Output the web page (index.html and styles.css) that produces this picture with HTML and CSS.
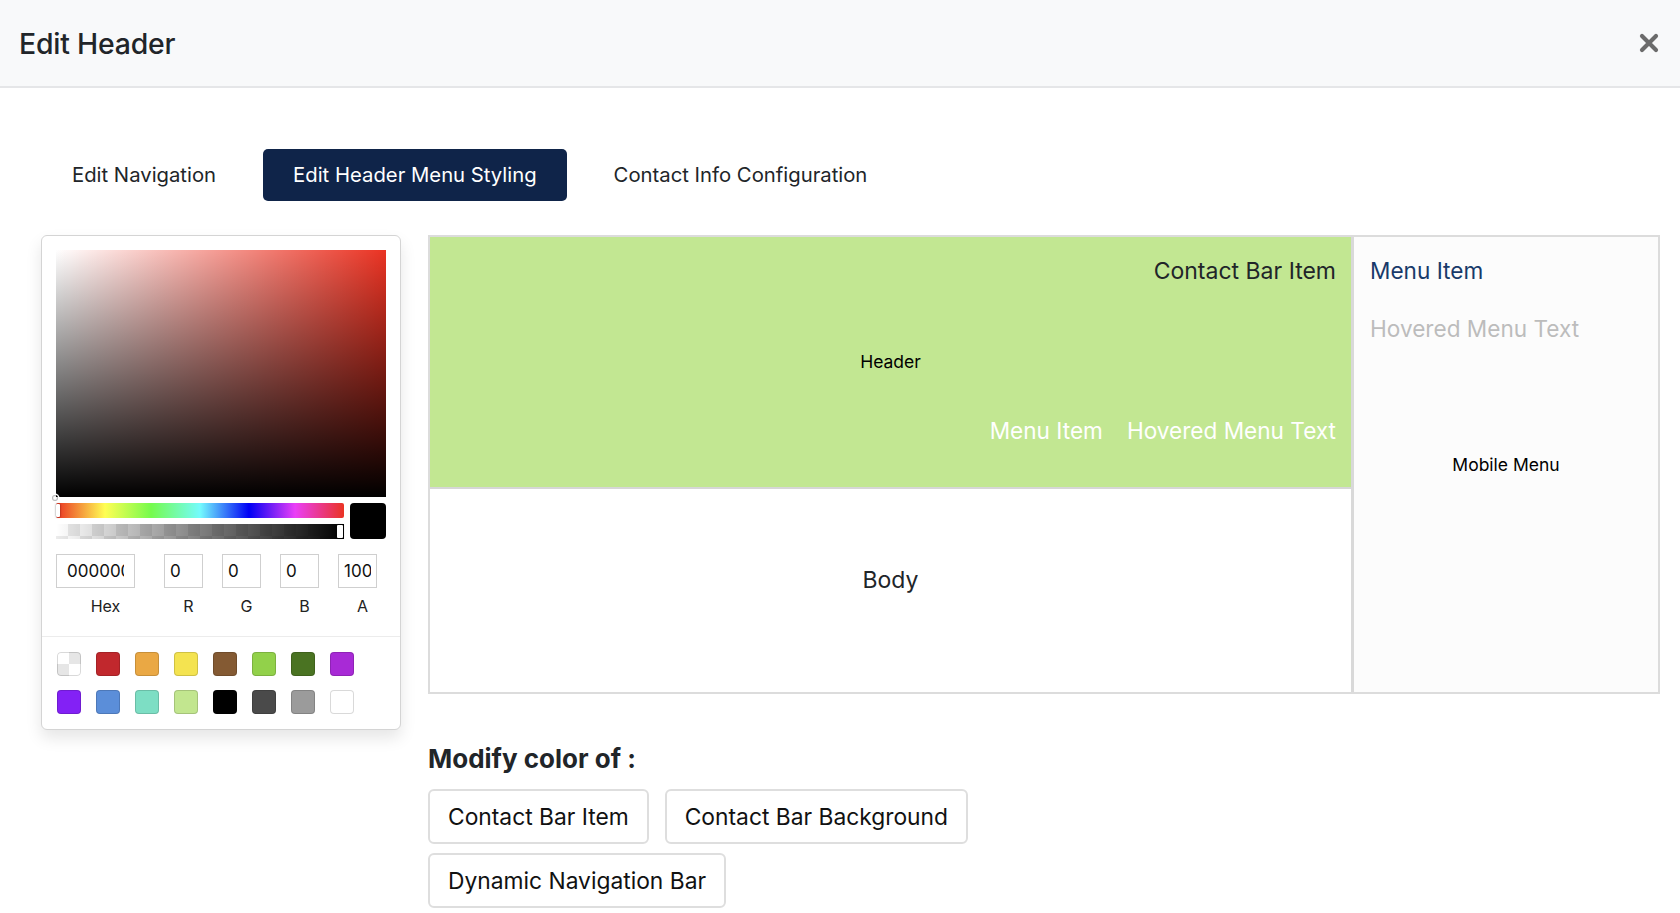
FILE: index.html
```html
<!DOCTYPE html>
<html lang="en">
<head>
    <meta charset="UTF-8">
    <meta name="viewport" content="width=device-width, initial-scale=1.0">
    <title>Edit Header</title>
    <link rel="stylesheet" href="styles.css">
</head>
<body>
    <div class="modal">
        <header class="modal-header">
            <h1 class="modal-title">Edit Header</h1>
            <button class="close" type="button" aria-label="Close">
                <svg width="20" height="20" viewBox="0 0 20 20">
                    <path d="M3 3 L17 17 M17 3 L3 17" stroke="#6b6b6b" stroke-width="4.2" stroke-linecap="round" fill="none"/>
                </svg>
            </button>
        </header>

        <main class="modal-body">
            <nav class="tabs">
                <a class="tab">Edit Navigation</a>
                <a class="tab active">Edit Header Menu Styling</a>
                <a class="tab">Contact Info Configuration</a>
            </nav>

            <div class="editor">
                <!-- color picker -->
                <div class="picker">
                    <div class="saturation">
                        <span class="sat-pointer"></span>
                    </div>
                    <div class="controls">
                        <div class="sliders">
                            <div class="hue"><span class="hue-pointer"></span></div>
                            <div class="alpha">
                                <div class="alpha-gradient"></div>
                                <span class="alpha-pointer"></span>
                            </div>
                        </div>
                        <div class="current"></div>
                    </div>
                    <div class="fields">
                        <div class="field field-hex">
                            <input type="text" value="000000">
                            <label>Hex</label>
                        </div>
                        <div class="field field-single">
                            <input type="text" value="0">
                            <label>R</label>
                        </div>
                        <div class="field field-single">
                            <input type="text" value="0">
                            <label>G</label>
                        </div>
                        <div class="field field-single">
                            <input type="text" value="0">
                            <label>B</label>
                        </div>
                        <div class="field field-single">
                            <input type="text" value="100">
                            <label>A</label>
                        </div>
                    </div>
                    <div class="presets">
                        <span class="swatch swatch-clear"></span>
                        <span class="swatch" style="background:#c1282d"></span>
                        <span class="swatch" style="background:#eaa844"></span>
                        <span class="swatch" style="background:#f4e350"></span>
                        <span class="swatch" style="background:#845a33"></span>
                        <span class="swatch" style="background:#92d14a"></span>
                        <span class="swatch" style="background:#4a7322"></span>
                        <span class="swatch" style="background:#a82ad6"></span>
                        <span class="swatch" style="background:#8321f5"></span>
                        <span class="swatch" style="background:#5b8ed9"></span>
                        <span class="swatch" style="background:#7ddec4"></span>
                        <span class="swatch" style="background:#c2e68f"></span>
                        <span class="swatch" style="background:#000000"></span>
                        <span class="swatch" style="background:#4a4a4a"></span>
                        <span class="swatch" style="background:#9b9b9b"></span>
                        <span class="swatch" style="background:#ffffff"></span>
                    </div>
                </div>

                <!-- preview -->
                <div class="preview-col">
                    <div class="preview">
                        <div class="preview-main">
                            <div class="pv-header">
                                <div class="pv-contact">Contact Bar Item</div>
                                <div class="pv-label">Header</div>
                                <div class="pv-menu">
                                    <span>Menu Item</span>
                                    <span>Hovered Menu Text</span>
                                </div>
                            </div>
                            <div class="pv-body">Body</div>
                        </div>
                        <div class="pv-mobile">
                            <div class="pv-mobile-items">
                                <span class="pv-mobile-item">Menu Item</span>
                                <span class="pv-mobile-hover">Hovered Menu Text</span>
                            </div>
                            <div class="pv-label">Mobile Menu</div>
                        </div>
                    </div>

                    <h2 class="modify-title">Modify color of :</h2>
                    <div class="modify-buttons">
                        <button type="button" class="modify-btn">Contact Bar Item</button>
                        <button type="button" class="modify-btn">Contact Bar Background</button>
                        <button type="button" class="modify-btn">Dynamic Navigation Bar</button>
                    </div>
                </div>
            </div>
        </main>
    </div>
</body>
</html>
```

FILE: styles.css
```css
body {
    margin: 0;
    font-family: Inter, "Liberation Sans", Arial, sans-serif;
    color: #212529;
    background: #fff;
}

.modal-header {
    height: 86px;
    background: #f8f9fa;
    border-bottom: 2px solid #e5e6e8;
    display: flex;
    align-items: center;
    justify-content: space-between;
    padding: 0 21px 0 19px;
}
.modal-title {
    margin: 0;
    font-size: 28.4px;
    font-weight: 500;
    letter-spacing: -0.2px;
}
.close {
    border: none;
    background: none;
    padding: 0;
    width: 20px;
    height: 20px;
    display: flex;
}

.modal-body {
    padding: 61px 20px 0 41px;
}

.tabs {
    display: flex;
    gap: 17px;
    margin-left: 1px;
}
.tab {
    display: block;
    padding: 0 30px;
    line-height: 52px;
    font-size: 20.3px;
    color: #212529;
    border-radius: 5px;
}
.tab.active {
    background: #0f2449;
    color: #fff;
}

.editor {
    display: flex;
    align-items: flex-start;
    gap: 27px;
    margin-top: 34px;
}

/* picker */
.picker {
    width: 360px;
    box-sizing: border-box;
    padding: 14px 14px 0;
    background: #fff;
    border: 1px solid #d4d4d4;
    border-radius: 6px;
    box-shadow: 0 8px 16px rgba(0, 0, 0, 0.1);
}
.saturation {
    position: relative;
    height: 247px;
    background:
        linear-gradient(to top, #000, rgba(0, 0, 0, 0)),
        linear-gradient(to right, #fff, rgba(255, 255, 255, 0)),
        #ea3323;
}
.sat-pointer {
    position: absolute;
    left: -4px;
    bottom: -4px;
    width: 6px;
    height: 6px;
    border-radius: 50%;
    box-shadow: 0 0 0 1.5px #fff, inset 0 0 1px 1px rgba(0, 0, 0, 0.3);
}
.controls {
    display: flex;
    gap: 6px;
    margin-top: 6px;
}
.sliders {
    flex: 1;
    display: flex;
    flex-direction: column;
    gap: 6px;
}
.hue {
    position: relative;
    height: 15px;
    border-radius: 2px;
    background: linear-gradient(to right, #ea3323 0%, #fffe54 17%, #75fb4c 33%, #74fbfd 50%, #0000f5 67%, #ea3ff7 83%, #ea3323 100%);
}
.hue-pointer {
    position: absolute;
    left: 0;
    top: 1px;
    width: 4px;
    height: 13px;
    background: #fff;
    border-radius: 1px;
    box-shadow: 0 0 2px rgba(0, 0, 0, 0.6);
}
.alpha {
    position: relative;
    height: 15px;
    background-color: #fff;
    background-image:
        linear-gradient(45deg, #ebebeb 25%, transparent 25%, transparent 75%, #ebebeb 75%),
        linear-gradient(45deg, #ebebeb 25%, transparent 25%, transparent 75%, #ebebeb 75%);
    background-size: 24px 24px;
    background-position: 0 0, 12px 12px;
}
.alpha-gradient {
    height: 100%;
    background: linear-gradient(to right, rgba(0, 0, 0, 0), #000);
}
.alpha-pointer {
    position: absolute;
    right: 1px;
    top: 1px;
    width: 6px;
    height: 13px;
    background: #fff;
    border-radius: 1px;
    box-shadow: 0 0 2px rgba(0, 0, 0, 0.6);
}
.current {
    width: 36px;
    height: 36px;
    border-radius: 4px;
    background: #000;
}

.fields {
    display: flex;
    padding-top: 15px;
}
.field {
    display: flex;
    flex-direction: column;
    flex-shrink: 0;
}
.field-hex {
    width: 99px;
}
.field-single {
    width: 49px;
    padding-left: 9px;
}
.field input {
    width: 80%;
    height: 34px;
    box-sizing: border-box;
    border: 1px solid #cfcfcf;
    padding: 0 5px;
    font-family: inherit;
    font-size: 17px;
    color: #111;
    outline: none;
}
.field-hex input {
    padding: 0 10px;
}
.field label {
    display: block;
    text-align: center;
    font-size: 16px;
    line-height: 20px;
    padding-top: 8px;
    color: #222;
}

.presets {
    margin: 20px -14px 0;
    padding: 15px 0 15px 15px;
    border-top: 1px solid #ececec;
    display: grid;
    grid-template-columns: repeat(8, 24px);
    column-gap: 15px;
    row-gap: 14px;
}
.swatch {
    width: 24px;
    height: 24px;
    border-radius: 4px;
    box-shadow: inset 0 0 0 1px rgba(0, 0, 0, 0.15);
}
.swatch-clear {
    background-color: #fff;
    background-image:
        linear-gradient(45deg, #e6e6e6 25%, transparent 25%, transparent 75%, #e6e6e6 75%),
        linear-gradient(45deg, #e6e6e6 25%, transparent 25%, transparent 75%, #e6e6e6 75%);
    background-size: 24px 24px;
    background-position: 0 0, 12px 12px;
}

/* preview */
.preview-col {
    flex: 1;
}
.preview {
    display: flex;
    height: 459px;
    box-sizing: border-box;
    border: 2px solid #dcdcdc;
}
.preview-main {
    flex: 1;
    display: flex;
    flex-direction: column;
}
.pv-header {
    height: 250px;
    background: #c2e792;
    display: grid;
    grid-template-rows: 1fr auto 1fr;
    font-size: 22.6px;
    line-height: 30px;
}
.pv-contact {
    justify-self: end;
    align-self: start;
    margin: 19px 15px 0 0;
    font-size: 23px;
}
.pv-label {
    justify-self: center;
    font-size: 17.5px;
    color: #000;
}
.pv-menu {
    justify-self: end;
    align-self: end;
    display: flex;
    gap: 24px;
    margin: 0 15px 41px 0;
    color: #fff;
}
.pv-body {
    flex: 1;
    border-top: 2px solid #d6d6d6;
    display: flex;
    align-items: center;
    justify-content: center;
    padding-bottom: 21px;
    font-size: 23px;
}
.pv-mobile {
    width: 304px;
    border-left: 3px solid #d9d9d9;
    background: #fcfcfc;
    display: grid;
    grid-template-rows: 1fr auto 1fr;
    font-size: 22.6px;
    line-height: 30px;
}
.pv-mobile-items {
    display: flex;
    flex-direction: column;
    align-items: flex-start;
    gap: 28px;
    padding: 19px 0 0 16px;
}
.pv-mobile-item {
    color: #183a6a;
}
.pv-mobile-hover {
    color: #bcbcbc;
}

.modify-title {
    margin: 50px 0 15px;
    font-size: 26px;
    line-height: 30px;
    font-weight: 700;
}
.modify-buttons {
    display: flex;
    flex-wrap: wrap;
    column-gap: 16px;
    row-gap: 9px;
    width: 600px;
}
.modify-btn {
    font-family: inherit;
    font-size: 22.8px;
    line-height: 36px;
    padding: 7.5px 18px;
    border: 2px solid #dedede;
    border-radius: 6px;
    background: #fff;
    color: #111;
}
```
